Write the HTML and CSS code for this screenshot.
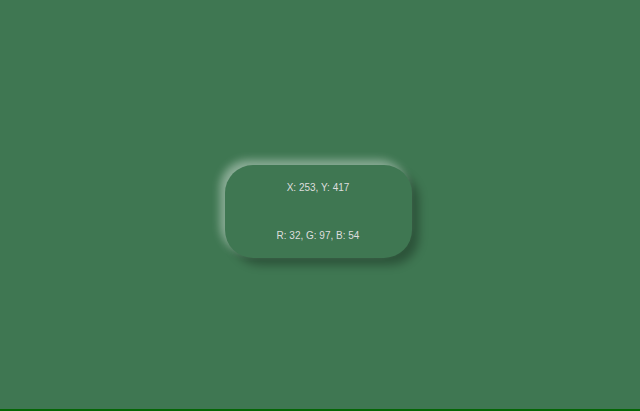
FILE: index.html
```html
<!DOCTYPE html>
<html>
<head>
<meta charset="utf-8">
<link rel="stylesheet" href="styles.css">
</head>
<body>
<main class="stage">
  <div class="card">
    <p class="line">X: 253, Y: 417</p>
    <p class="line">R: 32, G: 97, B: 54</p>
  </div>
</main>
</body>
</html>
```
FILE: styles.css
```css
html, body {
  margin: 0;
  padding: 0;
  background: #3f7752;
}
body {
  height: 411px;
  overflow: hidden;
  font-family: "Liberation Sans", Arial, sans-serif;
}
.stage {
  box-sizing: border-box;
  height: 411px;
  border-bottom: 2px solid #056605;
  display: flex;
  justify-content: center;
  align-items: center;
  padding-top: 14px;
  padding-right: 4px;
}
.card {
  box-sizing: border-box;
  width: 187px;
  height: 93px;
  border-radius: 28px;
  background: #3f7752;
  box-shadow: -5px -5px 9px rgba(255, 255, 255, 0.4), 7px 7px 10px rgba(0, 0, 0, 0.3);
  display: flex;
  flex-direction: column;
  justify-content: space-between;
  align-items: center;
  padding: 17px 0 16px;
}
.line {
  margin: 0;
  font-size: 10px;
  line-height: 12px;
  color: #dedede;
}
```
